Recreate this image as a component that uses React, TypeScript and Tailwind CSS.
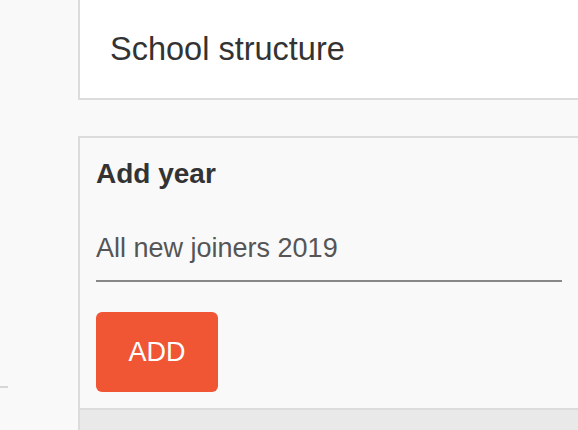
export default function App() {
	return (
		<div className="flex h-[430px] w-[578px] overflow-hidden bg-[#f9f9f9] font-['Liberation_Sans',Arial,sans-serif] text-[#333]">
			<div className="relative w-[78px] shrink-0">
				<div className="absolute left-0 top-[386px] h-[2px] w-[8px] bg-[#d6d6d6]" />
			</div>

			<div className="flex min-w-0 flex-1 flex-col">
				<div className="flex h-[100px] items-center border-b-2 border-l-2 border-[#dcdcdc] bg-white pl-[30px]">
					<h1 className="text-[32.5px] leading-none">School structure</h1>
				</div>

				<div className="mt-[36px] flex flex-1 flex-col border-l-2 border-[#dcdcdc]">
					<div className="border-b-2 border-t-2 border-[#dcdcdc] bg-[#f9f9f9] px-4 pb-[16px] pt-[22px]">
						<h2 className="text-[28px] font-bold leading-none">Add year</h2>
						<input
							className="mt-[27px] block h-[67px] w-full border-b-2 border-[#888] bg-transparent pt-[2px] text-[27px] text-[#555] outline-none"
							defaultValue="All new joiners 2019"
						/>
						<button className="mt-[30px] flex h-[80px] w-[122px] items-center justify-center rounded-[6px] bg-[#f05534] text-[27px] text-white">
							ADD
						</button>
					</div>
					<div className="flex-1 bg-[#e9e9e9]" />
				</div>
			</div>
		</div>
	)
}
